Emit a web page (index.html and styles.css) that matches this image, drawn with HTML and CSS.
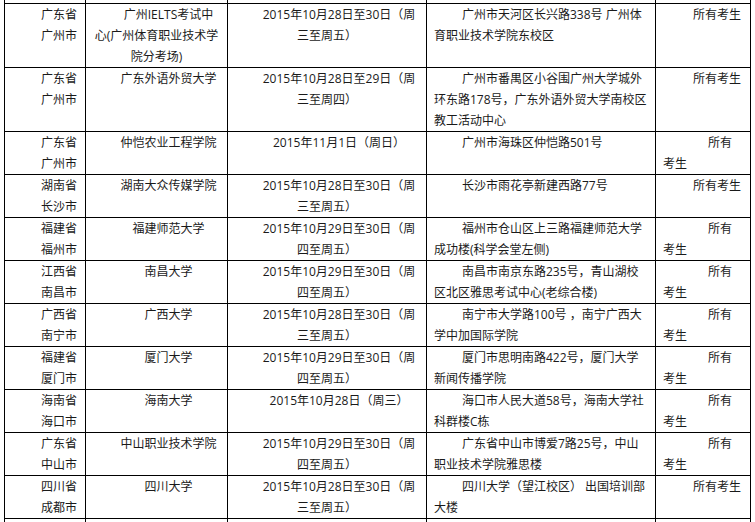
FILE: index.html
```html
<!DOCTYPE html>
<html lang="zh-CN">
<head>
<meta charset="utf-8">
<title>考点列表</title>
<link rel="stylesheet" href="styles.css">
</head>
<body>
<table class="sites">
  <colgroup>
    <col class="c-city"><col class="c-school"><col class="c-date"><col class="c-addr"><col class="c-who">
  </colgroup>
  <tbody>
    <tr class="stub"><td></td><td></td><td></td><td></td><td></td></tr>
    <tr>
      <td class="city">广东省<br>广州市</td>
      <td class="school">广州IELTS考试中<br>心(广州体育职业技术学<br>院分考场)</td>
      <td class="date">2015年10月28日至30日（周<br>三至周五）</td>
      <td class="addr">广州市天河区长兴路338号 广州体<br>育职业技术学院东校区</td>
      <td class="who">所有考生</td>
    </tr>
    <tr>
      <td class="city">广东省<br>广州市</td>
      <td class="school">广东外语外贸大学</td>
      <td class="date">2015年10月28日至29日（周<br>三至周四）</td>
      <td class="addr">广州市番禺区小谷围广州大学城外<br>环东路178号，广东外语外贸大学南校区<br>教工活动中心</td>
      <td class="who">所有考生</td>
    </tr>
    <tr>
      <td class="city">广东省<br>广州市</td>
      <td class="school">仲恺农业工程学院</td>
      <td class="date">2015年11月1日（周日）</td>
      <td class="addr">广州市海珠区仲恺路501号</td>
      <td class="who split">所有<br>考生</td>
    </tr>
    <tr>
      <td class="city">湖南省<br>长沙市</td>
      <td class="school">湖南大众传媒学院</td>
      <td class="date">2015年10月28日至30日（周<br>三至周五）</td>
      <td class="addr">长沙市雨花亭新建西路77号</td>
      <td class="who">所有考生</td>
    </tr>
    <tr>
      <td class="city">福建省<br>福州市</td>
      <td class="school">福建师范大学</td>
      <td class="date">2015年10月29日至30日（周<br>四至周五）</td>
      <td class="addr">福州市仓山区上三路福建师范大学<br>成功楼(科学会堂左侧)</td>
      <td class="who split">所有<br>考生</td>
    </tr>
    <tr>
      <td class="city">江西省<br>南昌市</td>
      <td class="school">南昌大学</td>
      <td class="date">2015年10月29日至30日（周<br>四至周五）</td>
      <td class="addr">南昌市南京东路235号，青山湖校<br>区北区雅思考试中心(老综合楼)</td>
      <td class="who split">所有<br>考生</td>
    </tr>
    <tr>
      <td class="city">广西省<br>南宁市</td>
      <td class="school">广西大学</td>
      <td class="date">2015年10月28日至30日（周<br>三至周五）</td>
      <td class="addr">南宁市大学路100号 ，南宁广西大<br>学中加国际学院</td>
      <td class="who split">所有<br>考生</td>
    </tr>
    <tr>
      <td class="city">福建省<br>厦门市</td>
      <td class="school">厦门大学</td>
      <td class="date">2015年10月29日至30日（周<br>四至周五）</td>
      <td class="addr">厦门市思明南路422号，厦门大学<br>新闻传播学院</td>
      <td class="who split">所有<br>考生</td>
    </tr>
    <tr>
      <td class="city">海南省<br>海口市</td>
      <td class="school">海南大学</td>
      <td class="date">2015年10月28日（周三）</td>
      <td class="addr">海口市人民大道58号，海南大学社<br>科群楼C栋</td>
      <td class="who split">所有<br>考生</td>
    </tr>
    <tr>
      <td class="city">广东省<br>中山市</td>
      <td class="school">中山职业技术学院</td>
      <td class="date">2015年10月29日至30日（周<br>四至周五）</td>
      <td class="addr">广东省中山市博爱7路25号，中山<br>职业技术学院雅思楼</td>
      <td class="who split">所有<br>考生</td>
    </tr>
    <tr>
      <td class="city">四川省<br>成都市</td>
      <td class="school">四川大学</td>
      <td class="date">2015年10月28日至30日（周<br>三至周五）</td>
      <td class="addr">四川大学（望江校区） 出国培训部<br>大楼</td>
      <td class="who">所有考生</td>
    </tr>
    <tr class="stub"><td></td><td></td><td></td><td></td><td></td></tr>
  </tbody>
</table>
</body>
</html>
```

FILE: styles.css
```css
html, body {
  margin: 0;
  padding: 0;
  background: #fff;
  overflow: hidden;
}

body {
  font-family: "Open Sans", "Noto Sans CJK SC", sans-serif;
  font-size: 12px;
  color: #1a1a1a;
}

.sites {
  border-collapse: collapse;
  table-layout: fixed;
  width: 747px;
  margin-left: 4px;
}

.c-city { width: 81px; }
.c-school { width: 142px; }
.c-date { width: 199px; }
.c-addr { width: 229px; }
.c-who { width: 95px; }

.sites td {
  border: 1px solid #000;
  padding: 0;
  line-height: 21px;
  vertical-align: top;
  white-space: nowrap;
}

.sites tr.stub td {
  height: 3px;
  line-height: 0;
  border-top: none;
  border-bottom: none;
}

.sites td.city {
  padding-left: 36px;
  text-align: left;
}

.sites td.school,
.sites td.date {
  text-align: center;
  text-indent: 24px;
  padding: 0 4px;
}

.sites td.addr {
  text-align: left;
  padding-left: 7px;
  text-indent: 28px;
}

.sites td.who {
  text-align: left;
  padding-left: 7px;
  text-indent: 30px;
}

.sites td.who.split {
  text-indent: 45px;
}
```
